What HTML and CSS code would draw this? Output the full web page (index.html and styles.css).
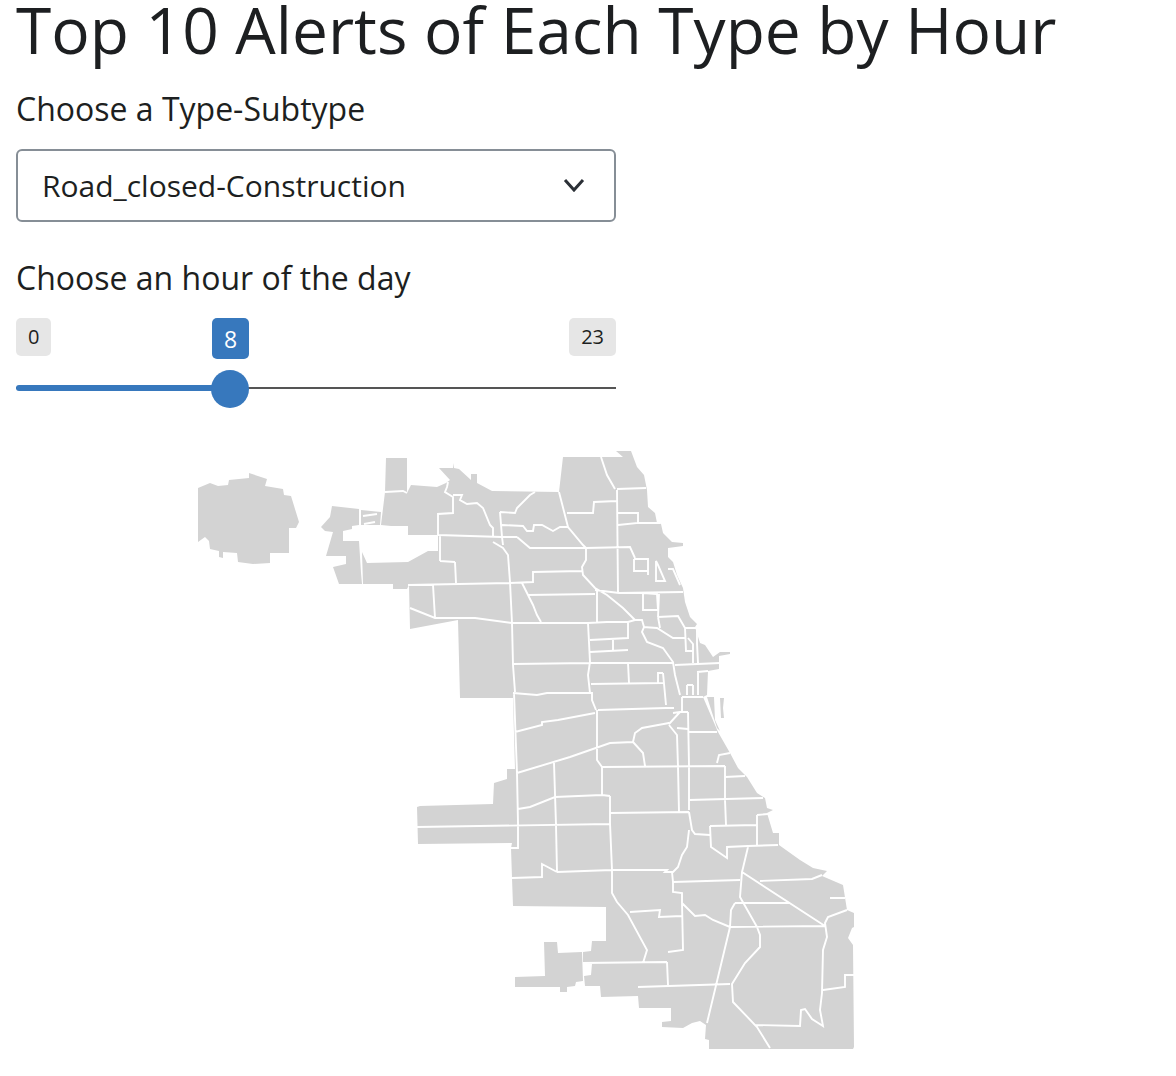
FILE: index.html
```html
<!DOCTYPE html>
<html lang="en">
<head>
    <meta charset="UTF-8">
    <title>Top 10 Alerts of Each Type by Hour</title>
    <link rel="stylesheet" href="styles.css">
</head>
<body>
    <main class="page">
        <h1 class="title">Top 10 Alerts of Each Type by Hour</h1>
        <label class="field-label">Choose a Type-Subtype</label>
        <div class="select-box">
            <span class="select-text">Road_closed-Construction</span>
            <svg class="chevron" viewBox="0 0 22 14"><path d="M2 2 L11 12 L20 2" /></svg>
        </div>
        <label class="field-label hour-label">Choose an hour of the day</label>
        <div class="slider">
            <div class="slider-labels">
                <span class="badge">0</span>
                <span class="badge">23</span>
            </div>
            <span class="badge badge-value">8</span>
            <div class="track"><div class="track-fill"></div></div>
            <div class="handle"></div>
        </div>
        <!-- chicago community areas -->
        <svg class="map" viewBox="190 445 670 610">
            <g class="map-areas">
                <polygon points="198,488 210,483 218,486 228,485 229,480 249,478 249,473 267,479 265,486 283,489 284,495 291,496 299,522 296,528 289,528 289,553 270,553 270,563 253,564 238,562 237,553 223,552 223,558 219,557 219,551 210,549 209,541 205,537 198,542" />
                <polygon points="332,506 359,509 359,525 352,526 352,529 343,531 343,541 359,541 361,573 362,584 339,584 333,567 346,564 346,556 326,556 333,532 325,531 321,527 330,517" />
                <polygon points="361,510 381,512 380,525 361,525" />
                <polygon points="515,977 545,976 544,942 557,942 558,953 582,952 583,981 576,982 575,986 567,987 567,992 560,992 560,987 515,987" />
                <polygon points="720,698 724,698 723,708 724,718 721,718" />
                <polygon points="707,697 714,697 715,720 720,731 717,728" />
                <polygon points="362,552 367,563 408,562 428,551 438,551 438,535 408,535 408,526 391,526 381,525 385,492 386,458 407,458 407,493 411,485 437,487 446,483 450,480 439,468 453,468 453,463 454,468 459,469 471,480 471,474 477,474 477,483 492,491 559,492 563,457 623,457 616,451 631,451 637,467 644,475 647,490 648,507 655,513 657,523 661,524 663,533 672,542 683,543 683,546 668,548 668,557 673,562 677,575 683,588 685,602 690,617 697,624 695,627 700,643 705,645 713,657 720,652 730,652 730,654 719,656 719,669 708,671 707,695 703,697 718,732 730,753 738,768 747,777 757,793 765,798 767,808 773,810 767,813 773,833 779,833 779,845 800,860 813,868 827,871 822,876 843,885 847,910 854,913 854,927 852,928 848,938 853,945 854,1047 853,1049 709,1049 709,1040 705,1039 706,1025 700,1021 692,1023 683,1028 662,1027 662,1022 671,1021 671,1008 639,1008 638,996 601,997 600,986 585,986 584,976 591,975 592,964 583,963 583,952 591,951 592,941 606,941 606,907 513,906 512,878 511,848 512,843 418,844 417,807 420,806 493,804 494,783 507,779 507,769 515,769 513,698 460,698 458,620 410,629 409,585 407,589 393,589 393,584 363,584" />
            </g>
            <path class="map-lines" d="M385 492 L403 491 L407 493
                M448 482 L447 487 L445 492 L453 497 L453 513 L438 514 L438 535
                M453 495 L462 495 L460 500 L467 504 L477 503 L483 508 L490 525 L493 528 L493 536
                M438 535 L470 536 L502 537 L517 537
                M500 512 L515 513 L517 508 L530 495 L535 492
                M500 512 L502 537
                M502 525 L523 526 L527 531 L533 531 L534 525 L542 525 L553 531 L560 527 L568 527
                M559 492 L568 527 L583 545 L586 548 L586 560 L582 567 L583 575 L595 588 L607 595 L623 608 L635 620 L642 620 L644 627 L642 632 L647 642 L663 648 L673 662 L675 675 L680 695
                M517 537 L530 548 L586 548 L630 547 L635 558
                M634 559 L648 559 L648 575 M648 571 L634 571 L634 559
                M656 561 L656 581 L665 581 L658 565 Z
                M668 569 L673 569 L680 585
                M617 490 L618 593 M617 489 L646 488
                M601 457 L607 475 L615 489
                M618 513 L638 513 L638 523 L618 525 M638 523 L660 523
                M567 513 L593 513 L594 502 L617 501
                M595 590 L619 593 L683 592
                M493 542 L503 548 L508 555 L510 582 L512 623 L513 665 L515 692
                M502 537 L503 545
                M408 585 L510 583 L533 582 L533 572 L582 571
                M522 583 L533 605 L537 615 L541 622
                M528 595 L595 594
                M597 590 L597 622
                M410 608 L435 618 L475 618 L512 623 L588 623 L607 622 L628 622 L635 620
                M433 585 L435 618
                M455 562 L456 583 M440 561 L455 562 M440 536 L440 561
                M363 516 L377 514 M364 524 L375 522
                M588 623 L590 662 L588 675 L590 693
                M590 640 L628 638 L628 622
                M590 652 L628 650 M613 640 L613 651
                M513 664 L590 663 L673 663 M675 665 L720 663
                M628 663 L629 683
                M591 684 L663 683
                M663 673 L658 673 L658 683 M663 673 L666 705
                M643 627 L657 628 L673 638 L685 638
                M658 617 L678 616 L685 628 L697 628 L697 643 L698 663
                M658 617 L660 628
                M685 628 L686 651 L693 651 L693 644 L688 638 M693 651 L693 663
                M643 593 L643 610 L658 610 L657 594 Z
                M659 594 L658 617
                M697 672 L708 671 M698 672 L698 695
                M687 685 L687 695 M693 685 L693 695 M687 685 L693 685
                M513 693 L537 695 L547 693 L592 693 L592 700 L596 710
                M598 710 L666 708 L674 708 M673 713 L680 712 L688 712
                M682 697 L682 712 M682 697 L703 697
                M688 712 L689 765 L689 810
                M689 732 L717 732
                M669 724 L680 712
                M669 723 L642 728 L635 733 L633 742 L610 743 L570 757 L517 773
                M633 742 L643 753 L645 766
                M669 725 L677 735 L678 767 L679 812
                M677 728 L688 729
                M602 767 L725 766
                M597 710 L597 760 L602 767 L602 795
                M610 796 L602 795 L555 797 L530 807 L518 809
                M610 796 L610 823 L612 870 L612 893 L617 902 L628 915 L647 950 L643 963
                M610 813 L689 812
                M554 763 L556 825 L557 872
                M514 693 L517 773 L518 823 L518 848 L510 848
                M515 732 L542 725 L542 722 L558 720 L595 713
                M417 827 L610 824
                M557 872 L542 864 L542 877 L512 878
                M557 872 L612 870 L667 870 L665 872 L673 872 L678 867 L682 855 L687 847 L689 830
                M689 812 L692 830 L695 834 L710 835
                M725 766 L725 800 L726 825
                M689 800 L763 798
                M725 777 L745 776
                M710 826 L757 825
                M710 826 L711 847 L727 858 L727 847 L748 846 L778 845
                M757 815 L768 814 M757 815 L757 845
                M748 847 L743 868 L742 872 L740 897 L757 927
                M717 763 L719 755 L730 753
                M672 872 L673 882 L673 892 L682 893 L682 903 L695 916 L705 915 L713 920 L730 927
                M630 912 L660 910 L659 917 L682 916
                M583 963 L667 962
                M668 952 L683 950 L682 903
                M667 962 L668 985
                M638 987 L730 984
                M673 882 L740 880
                M742 872 L825 926
                M730 927 L825 926
                M735 903 L790 903
                M735 903 L731 910 L730 927 L707 1023
                M757 927 L760 935 L760 947 L745 963 L732 984 L733 1002 L757 1027 L770 1048
                M755 1025 L800 1026 L801 1010 L805 1009 L812 1019 L823 1026 L820 1010 L822 993 L823 950 L827 937 L825 923 L828 917 L847 910
                M823 990 L845 987 L845 975 L854 975
                M760 881 L812 879 L822 875
                M830 898 L845 898" />
        </svg>
    </main>
</body>
</html>
```

FILE: styles.css
```css
body{
    margin: 0;
    background-color: #fff;
    color: #1d1f21;
    font-family: "Open Sans", sans-serif;
}
.page{
    padding: 0 16px;
}
.title{
    margin: 0;
    font-size: 64px;
    font-weight: 400;
    line-height: 60px;
}
.field-label{
    display: block;
    margin-top: 29px;
    font-size: 32px;
    line-height: 40px;
}
.select-box{
    display: flex;
    box-sizing: border-box;
    justify-content: space-between;
    align-items: center;
    width: 600px;
    height: 73px;
    margin-top: 20px;
    padding: 0 29px 2px 24px;
    border: 2px solid #868e96;
    border-radius: 6px;
    font-size: 30px;
}
.select-text{
    padding-top: 2px;
}
.chevron{
    width: 22px;
    height: 14px;
}
.chevron path{
    fill: none;
    stroke: #2b3036;
    stroke-width: 3;
}
.hour-label{
    margin-top: 36px;
}
.slider{
    position: relative;
    width: 600px;
    height: 95px;
    margin-top: 20px;
}
.slider-labels{
    display: flex;
    justify-content: space-between;
}
.badge{
    box-sizing: border-box;
    height: 38px;
    padding: 0 12px;
    background-color: #e6e6e6;
    border-radius: 5px;
    font-size: 20px;
    line-height: 37px;
}
.badge-value{
    position: absolute;
    left: 196px;
    top: 0;
    width: 37px;
    height: 41px;
    padding: 0;
    background-color: #3778bd;
    color: #fff;
    font-size: 23px;
    line-height: 42px;
    text-align: center;
}
.track{
    position: absolute;
    left: 0;
    top: 69px;
    width: 100%;
    height: 2px;
    background-color: #555;
}
.track-fill{
    width: 214px;
    height: 6px;
    margin-top: -2px;
    background-color: #3778bd;
    border-radius: 3px 0 0 3px;
}
.handle{
    position: absolute;
    left: 195px;
    top: 52px;
    width: 38px;
    height: 38px;
    background-color: #3778bd;
    border-radius: 50%;
}
.map{
    display: block;
    width: 670px;
    height: 610px;
    margin-left: 174px;
    margin-top: 32px;
}
.map-areas{
    fill: #d3d3d3;
}
.map-lines{
    fill: none;
    stroke: #fff;
    stroke-width: 1.9;
}
```
